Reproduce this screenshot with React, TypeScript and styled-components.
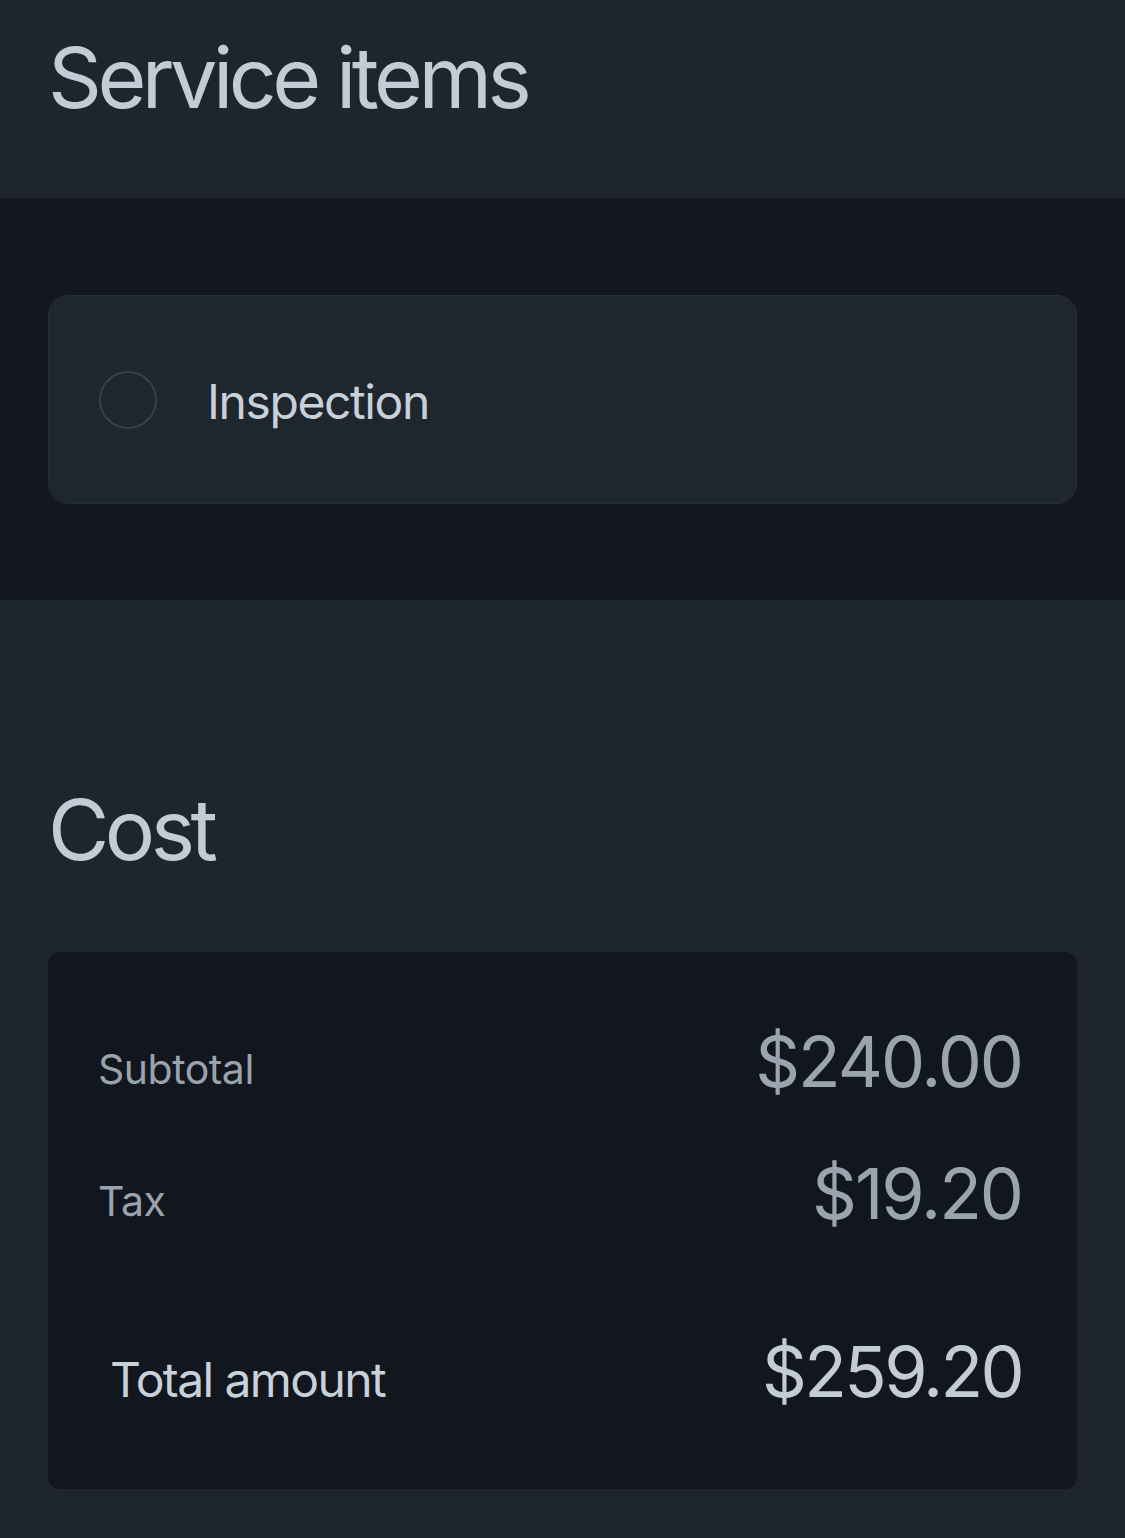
import React from "react";
import styled, { createGlobalStyle } from "styled-components";

const Global = createGlobalStyle`
  html, body { margin: 0; padding: 0; background: #1f252d; }
  body { font-family: Inter, "Noto Sans", sans-serif; -webkit-font-smoothing: antialiased; }
`;

const Page = styled.div`
  width: 1125px;
  min-height: 1538px;
  display: flex;
  flex-direction: column;
  background: #1f252d;
`;

const Header = styled.header`
  height: 198px;
  box-sizing: border-box;
  padding: 28px 48px 0;
  background: #1f252d;
`;

const Title = styled.h1`
  margin: 0;
  font-size: 84px;
  line-height: 100px;
  font-weight: 400;
  letter-spacing: -4.5px;
  color: #c3ccd6;
`;

const ItemsBand = styled.section`
  background: #13171e;
  padding: 97px 48px 96px;
`;

const ItemCard = styled.div`
  height: 209px;
  box-sizing: border-box;
  border-radius: 20px;
  background: #1f262e;
  border: 1px solid #252d36;
  display: flex;
  align-items: center;
  padding-left: 50px;
  gap: 50px;
`;

const Radio = styled.span`
  width: 58px;
  height: 58px;
  box-sizing: border-box;
  border-radius: 50%;
  border: 2px solid #37414b;
  flex: none;
`;

const ItemLabel = styled.span`
  font-size: 48px;
  letter-spacing: -1.4px;
  color: #c8d0d9;
  padding-top: 3px;
`;

const CostSection = styled.section`
  padding: 180px 48px 48px;
  display: flex;
  flex-direction: column;
`;

const CostCard = styled.div`
  margin-top: 72px;
  height: 537px;
  box-sizing: border-box;
  border-radius: 12px;
  background: #12161e;
  padding: 70px 55px 0 50px;
  display: flex;
  flex-direction: column;
`;

const Row = styled.div<{ $top?: number; $indent?: number }>`
  display: flex;
  align-items: baseline;
  justify-content: space-between;
  height: 80px;
  margin-top: ${(p) => p.$top ?? 0}px;
  padding-left: ${(p) => p.$indent ?? 0}px;
`;

const Label = styled.span<{ $strong?: boolean }>`
  font-size: ${(p) => (p.$strong ? 48 : 41)}px;
  letter-spacing: ${(p) => (p.$strong ? -1.6 : -0.5)}px;
  color: ${(p) => (p.$strong ? "#c8d0d9" : "#9aa3ad")};
  position: relative;
  top: ${(p) => (p.$strong ? 0 : -3)}px;
`;

const Amount = styled.span<{ $strong?: boolean }>`
  font-size: 70px;
  line-height: 80px;
  letter-spacing: ${(p) => (p.$strong ? -2.7 : -2)}px;
  color: ${(p) => (p.$strong ? "#c3ccd6" : "#9aa4af")};
`;

export default function App() {
  return (
    <Page>
      <Global />
      <Header>
        <Title>Service items</Title>
      </Header>
      <ItemsBand>
        <ItemCard>
          <Radio />
          <ItemLabel>Inspection</ItemLabel>
        </ItemCard>
      </ItemsBand>
      <CostSection>
        <Title>Cost</Title>
        <CostCard>
          <Row>
            <Label>Subtotal</Label>
            <Amount>$240.00</Amount>
          </Row>
          <Row $top={52}>
            <Label>Tax</Label>
            <Amount>$19.20</Amount>
          </Row>
          <Row $top={98} $indent={12}>
            <Label $strong>Total amount</Label>
            <Amount $strong>$259.20</Amount>
          </Row>
        </CostCard>
      </CostSection>
    </Page>
  );
}
